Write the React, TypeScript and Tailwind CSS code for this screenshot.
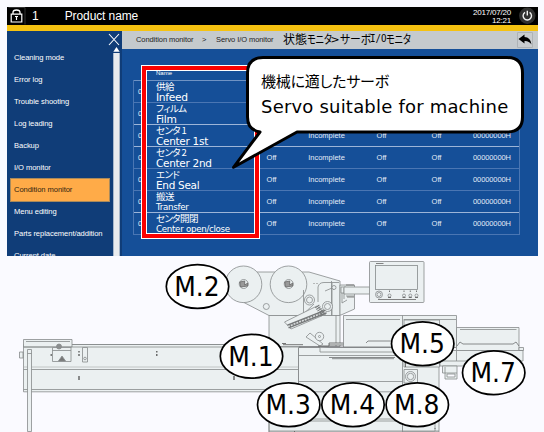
import React from "react";

const menu = [
  "Cleaning mode",
  "Error log",
  "Trouble shooting",
  "Log leading",
  "Backup",
  "I/O monitor",
  "Condition monitor",
  "Menu editing",
  "Parts replacement/addition",
  "Current date",
];

// "cells" lists the value columns that stay visible beside the callout
const servos = [
  { ja: "供給", en: "Infeed", cls: "text-[10.7px]", line: "border-[#6f93c4]", cells: 0 },
  { ja: "フィルム", en: "Film", cls: "text-[10.7px]", line: "border-[#4a76b3]", cells: 0 },
  { ja: "センタ 1", en: "Center 1st", cls: "text-[10.5px]", line: "border-[#9db5d8]", cells: 4 },
  { ja: "センタ 2", en: "Center 2nd", cls: "text-[10.5px]", line: "border-[#9db5d8]", cells: 5 },
  { ja: "エンド", en: "End Seal", cls: "text-[10.5px]", line: "border-[#4a76b3]", cells: 5 },
  { ja: "搬送", en: "Transfer", cls: "text-[8.7px]", line: "border-[#4a76b3]", cells: 5 },
  { ja: "センタ開閉", en: "Center open/close", cls: "text-[8.7px]", line: "border-[#9db5d8]", cells: 5 },
];

const motors = [
  { n: "M.2", x: 197.5, y: 286.5 },
  { n: "M.1", x: 251.5, y: 356.3 },
  { n: "M.5", x: 422.7, y: 343.7 },
  { n: "M.7", x: 493.7, y: 372.7 },
  { n: "M.3", x: 288.7, y: 404.7 },
  { n: "M.4", x: 353, y: 404.7 },
  { n: "M.8", x: 417.3, y: 404.7 },
];

function TopBar() {
  return (
    <header className="flex h-[24px] shrink-0 items-start border-b-[6px] border-[#f5c211] bg-black text-white">
      <svg className="ml-px h-[18px] w-[18px] shrink-0" viewBox="0 0 18 18" fill="none" stroke="#fff">
        <path d="M.5 .5H17M17 .5V17.5" stroke="#333" />
        <path d="M5 7V5.5Q5 3 8.5 3T12 5.500V7" strokeWidth="1.3" />
        <path d="M3.200 7.200H13.800V15H3.200Z" strokeWidth="1.2" />
        <path d="M7 9.500H10M8.500 9.500V13" strokeWidth="1.2" />
      </svg>
      <span className="ml-[6px] text-[12px] leading-[18px]">1</span>
      <span className="ml-[26px] text-[12px] leading-[18px] tracking-[-0.1px]">Product name</span>
      <span className="ml-auto text-right text-[8px] leading-[8px] tracking-[-0.2px]">
        <span className="block pt-[2px]">2017/07/20</span>
        <span className="block">12:21</span>
      </span>
      <svg className="ml-[7px] mr-[2px] h-[18px] w-[18px]" viewBox="0 0 18 18" fill="none">
        <circle cx="9.300" cy="8.700" r="8.200" fill="#303030" />
        <path d="M7 5.300A4.200 4.200 0 1 0 11.600 5.300M9.300 3.800V8.500" stroke="#f1f1f1" strokeWidth="1.4" />
      </svg>
    </header>
  );
}

function Sidebar() {
  return (
    <aside className="flex w-[115px] shrink-0 bg-[#103d78]">
      <nav className="w-[106px] pt-[16px] text-[7.6px] tracking-[-0.07px] text-white">
        {menu.map((m) => (
          <div
            key={m}
            className={
              m === "Condition monitor"
                ? "ml-[4px] mr-[4px] flex h-[22px] items-center whitespace-nowrap bg-[#ffab48] pl-[3px] text-[#30240f] outline outline-[0.5px] outline-[#a98a5c]"
                : "flex h-[22px] items-center whitespace-nowrap pl-[7px]"
            }
          >
            {m}
          </div>
        ))}
      </nav>
      <svg className="-ml-[6px] h-[225px] w-[15px] shrink-0" viewBox="107 31 15 225">
        <path d="M109 34L119 45M119 34L109 45" stroke="#fff" strokeWidth="1.1" />
        <path d="M113.300 53H119.700V256H113.300Z" fill="#e9ebee" />
        <path d="M113.300 51.700L116.500 47L119.700 51.700Z" fill="#fff" />
      </svg>
    </aside>
  );
}

function ServoTable() {
  return (
    <div className="relative ml-[11px] mt-[15px] w-[387px]">
      <div className="h-[16px] pl-[23px] pt-[5px] text-[6px] leading-[8px] text-white">Name</div>
      <div className="border-x border-b border-[#4a76b3]">
        {servos.map((s) => (
          <div key={s.en} className={"flex h-[22px] items-center border-t text-[7.5px] text-[#e3ebf7] " + s.line}>
            <span className="w-[22px] pl-[4px]">0</span>
            <span className="w-[105.5px] self-start whitespace-nowrap font-['DejaVu_Sans','Noto_Sans_CJK_JP',sans-serif] text-white">
              <span className="block h-[11px] font-['Noto_Sans_CJK_JP',sans-serif] text-[9.5px] leading-[11px] tracking-[-0.6px] [font-feature-settings:'palt']">{s.ja}</span>
              <span className={"block leading-[11px] tracking-[-0.3px] " + s.cls}>{s.en}</span>
            </span>
            <span className="w-[20px] text-center">{s.cells > 4 && "Off"}</span>
            {s.cells > 3 && (
              <>
                <span className="w-[90px] text-center">Incomplete</span>
                <span className="w-[20px] text-center">Off</span>
                <span className="ml-[35px] w-[20px] text-center">Off</span>
                <span className="ml-[26.5px] whitespace-nowrap tracking-[-0.1px]">00000000H</span>
              </>
            )}
          </div>
        ))}
      </div>
      <div className="absolute left-[8px] top-[1px] h-[174px] w-[119px] border border-white">
        <div className="h-full w-full border-4 border-[#fb0000]">
          <div className="h-full w-full border border-white" />
        </div>
      </div>
    </div>
  );
}

function Callout() {
  return (
    <div className="absolute left-[230px] top-[54px] h-[116px] w-[296px]">
      <svg className="absolute inset-0 h-full w-full" viewBox="230 54 296 116">
        <path
          d="M263 57.500H507Q522.500 57.500 522.500 73V117Q522.500 132 507 132H297L233.500 167.300L260 132Q247.500 130 247.500 117V73Q247.500 57.500 263 57.500Z"
          fill="#fff"
          stroke="#000"
          strokeWidth="3"
          strokeLinejoin="round"
        />
      </svg>
      <div className="relative whitespace-nowrap pl-[31px] pt-[17px] text-black">
        <div className="font-['Noto_Sans_CJK_JP',sans-serif] text-[15px] leading-[20px] tracking-[-0.2px] [font-feature-settings:'palt']">機械に適したサーボ</div>
        <div className="mt-[3px] font-['DejaVu_Sans',sans-serif] text-[18px] leading-[26px] tracking-[0.2px]">Servo suitable for machine</div>
      </div>
    </div>
  );
}

function Machine() {
  return (
    <svg className="block h-[176px] w-[544px] shrink-0" viewBox="0 256 544 176">
      <g fill="#ebf0f1" stroke="#868a8b" strokeWidth=".8">
        {/* infeed conveyor */}
        <path d="M23.500 344.500H300V391.800H23.500Z" />
        <path d="M23.500 339.500H72V347H23.500ZM26 341.500H70M72 344.500H300M23.500 347H300M23.500 369.500H300M23.500 389.500H300" />
        <path d="M24 367H300" stroke="#b6babb" />
        <path d="M27.500 349.500H31.500V431.500H27.500ZM27.500 353.500H31.500M19.500 352H23V358H19.500Z" />
        <path d="M52.500 347.500H71V361.500H52.500ZM52.500 350.500H71M82.500 347.500H87.500V362H82.500Z" />
        <path d="M58.500 361L62 356L65.500 361Z" fill="#777" />
        <circle cx="59" cy="346.500" r="2.500" fill="#8b8e8f" />
        <circle cx="85" cy="358.500" r="1.300" />
        <path d="M79 351V352.500M79 354V356M156.800 351V352.500M156.800 354V356M79 376V380M234 376V380M50.500 355H52" stroke="#555" strokeWidth="1.3" />

        {/* film unit */}
        <path d="M244 272H309L340 281V315.500H269L241 301Z" />
        <path d="M340 285H354.500V309L341 315H340Z" />
        <path d="M269 315.500H340V346.500H269ZM336 315.500V346.500M331.500 281V315.500" />
        <circle cx="243.500" cy="284.300" r="18.300" />
        <circle cx="288.500" cy="284.300" r="18.300" />
        <circle cx="266.300" cy="306.500" r="3" />
        {[243.700, 288.700].map((x) => (
          <g key={x}>
            <circle cx={x} cy="284" r="4.500" />
            <path d={`M${x - 4} 282L${x + 1} 281V285L${x + 4} 283V286L${x - 3} 287Z`} fill="#999" stroke="#666" />
          </g>
        ))}
        <path d="M303.500 290V314L314 304M318 302V287Q319 282.500 324 282.500H339M332 283V315M325 291L332 288L334 290M341 287H346V293H341ZM342 293V303L347 300M344 288V299M346 296H354" fill="none" />
        <path d="M314 283V284M317 283V284M346 285H354M347 297H354" stroke="#666" />
        <circle cx="309.500" cy="300" r="5" /><circle cx="309.500" cy="300" r="3" />
        <circle cx="327.500" cy="306.500" r="5" /><circle cx="327.500" cy="306.500" r="3" />
        <circle cx="334" cy="287.500" r="2" />
        <path d="M284.500 322L317 306L326 314L291 329Z" />
        <path d="M288 326.500L326 311.500" stroke="#757879" strokeWidth="4.500" />
        <path d="M288 326.500L326 311.500" stroke="#d7dbdc" strokeWidth="1.600" strokeDasharray="2 1" />
        <path d="M317 306L323 315" stroke="#757879" strokeWidth="5" strokeDasharray="1 1" />
        <path d="M306 337L310 333L323 344L320 346Z" />
        <circle cx="319.500" cy="336.500" r="4.200" /><circle cx="319.500" cy="336.500" r="1" />
        <path d="M282 343.500H286M283 344.700H303M318 346H329V343H344V345H329" stroke="#555" />

        {/* display arm and operation panel */}
        <path d="M344 287H370V294H344Z" />
        <rect x="369.500" y="261.500" width="54.500" height="41" rx="1" />
        <rect x="375.500" y="265.500" width="42" height="24" />
        <path d="M376 263.500H383.500M378 299.500H416" stroke="#666" />
        <circle cx="379" cy="294.500" r="3.500" /><circle cx="379" cy="294.500" r="2" />
        {[389.500, 404, 410.300, 416.500].map((x) => (
          <g key={x}>
            <circle cx={x} cy="295.500" r="1.500" />
            <path d={`M${x} 290.500V292M${x - 1.500} 297.500H${x + 1.500}`} stroke="#555" />
          </g>
        ))}

        {/* main body */}
        <path d="M298.500 347.500H439V432H269V391.800H298.500Z" />
        <path d="M343.500 315.500H456.500V347.500H343.500ZM346 319.500H400M403.500 319.500H456M402.500 315.500V432M404 320H439.500V367H404Z" />
        <path d="M298.500 355.500H403M298.500 381.500H403M298.500 391.800H403M269 419H439M269 421H439M269 431H439M298.500 347.500V392M320 347.500V352H403M269 391V432" />
        <path d="M329 357.500H395M332 358.700H394M299 347H402M366 343L368 341H394" stroke="#6d7071" fill="none" />
        <path d="M404 369.500H417.500V383H404ZM402.500 419H435V431H402.500Z" />
        <circle cx="410.500" cy="376.500" r="5" /><circle cx="410.500" cy="376.500" r="3.200" />
        <path d="M294.500 431V432M435 428V429M405.500 363V367" stroke="#555" />

        {/* discharge conveyor */}
        <path d="M456.500 327.500H519V350.500H456.500ZM460 329.500H516.500" />
        <path d="M457 346L460 342L463 344H513L516 342L519 346" fill="none" stroke="#6d7071" />
        <path d="M440 350.500H523V361H500L480 366H440ZM440 361H500M456.500 350.500V361M519 347.500H523.500V350.500H519Z" />
        <path d="M442.500 366V373H445V379H457V366ZM445 367V373H457M447 374H455V377H447Z" />
      </g>
      {motors.map((m) => (
        <g key={m.n}>
          <ellipse cx={m.x} cy={m.y} rx="31.200" ry="21.900" fill="#fff" stroke="#000" strokeWidth="1.700" />
          <text x={m.x - 0.5} y={m.y + 9.300} textAnchor="middle" className="font-['DejaVu_Sans',sans-serif]" fontSize="26" textLength="45.500" lengthAdjust="spacingAndGlyphs">
            {m.n}
          </text>
        </g>
      ))}
    </svg>
  );
}

export default function App() {
  return (
    <div className="relative flex h-[432px] w-[544px] flex-col overflow-hidden bg-[#fafaff] font-['Liberation_Sans',Arial,sans-serif]">
      <section className="ml-[7px] mt-[7px] flex h-[249px] w-[531px] shrink-0 flex-col overflow-hidden bg-[#154f98]">
        <TopBar />
        <div className="flex h-[225px]">
          <Sidebar />
          <main className="min-w-0 grow">
            <div className="flex h-[18px] items-center whitespace-nowrap bg-[#c5cacd] pl-[14px] text-[7.5px] tracking-[-0.08px] text-[#1d1d1f]">
              <span className="w-[66px]">Condition monitor</span>
              <span className="w-[14px]">&gt;</span>
              <span className="w-[67px]">Servo I/O monitor</span>
              <span className="flex font-['Noto_Sans_CJK_JP',sans-serif] text-[12px] leading-[16px] pb-[2px] text-black [font-feature-settings:'palt']">
                <span className="w-[24px]">状態</span>
                <span className="w-[23.5px] origin-left scale-x-[0.76]">モニタ</span>
                <span className="w-[9.5px] origin-left scale-x-[1.2]">&gt;</span>
                <span className="w-[29.5px] origin-left scale-x-[0.9]">サーボ</span>
                <span className="w-[16.5px] origin-left font-['DejaVu_Sans_Mono',monospace] text-[10px]">
                  <span className="inline-block origin-left scale-x-[0.92]">I/O</span>
                </span>
                <span className="w-[23.5px] origin-left scale-x-[0.76]">モニタ</span>
              </span>
              <svg className="ml-auto mr-[5px] h-[16px] w-[16px]" viewBox="0 0 16 16">
                <path d="M.5 .5H15.500V15.500H.5Z" fill="#c8cccf" stroke="#aeb3b6" />
                <path d="M1.500 7L7.500 2.500V5Q13.500 5 14.500 12.500Q12 8.700 7.500 9V11.500Z" fill="#000" />
              </svg>
            </div>
            <ServoTable />
          </main>
        </div>
      </section>
      <Machine />
      <Callout />
    </div>
  );
}
